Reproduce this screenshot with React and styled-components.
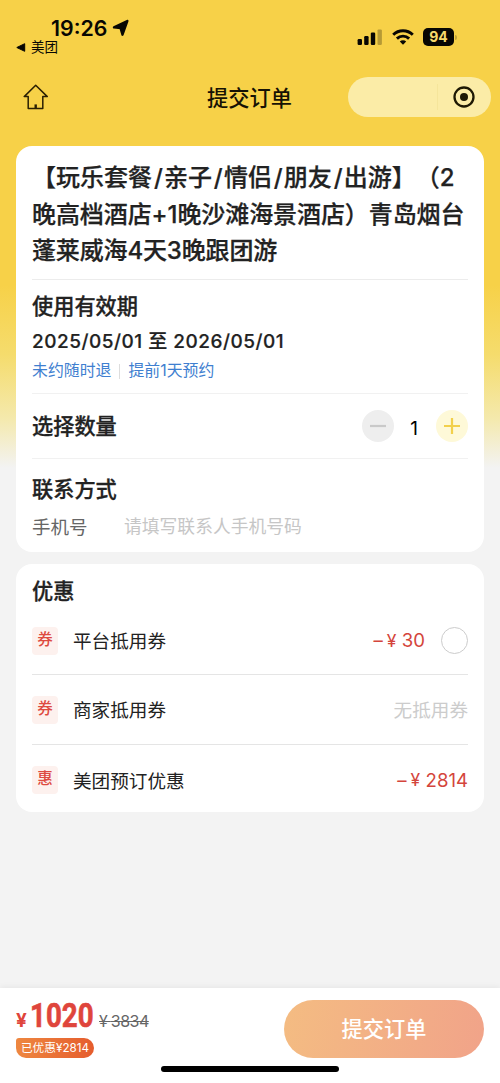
import React from "react";
import styled, { createGlobalStyle } from "styled-components";

const themes = ["【玩乐套餐", "亲子", "情侣", "朋友", "出游】（2"];

const discounts = [
  { tag: "券", name: "平台抵用券", amount: "30", selectable: true },
  { tag: "券", name: "商家抵用券" },
  { tag: "惠", name: "美团预订优惠", amount: "2814" },
];

export default function App() {
  return (
    <>
      <GlobalStyle />
      <Page>
        <StatusBar>
          <StatusLeft>
            <Clock>
              <span>19:26</span>
              <svg width="18" height="18" viewBox="0 0 18 18">
                <path
                  d="M15.3 2 2 8.4l6.6.7 1.9 6.6z"
                  fill="#080703"
                  stroke="#080703"
                  strokeWidth="2.4"
                  strokeLinejoin="round"
                />
              </svg>
            </Clock>
            <BackApp>
              <svg width="10" height="9" viewBox="0 0 10 9">
                <path d="M.8 4.5 8.7.7v7.6z" fill="#080703" stroke="#080703" />
              </svg>
              <span>美团</span>
            </BackApp>
          </StatusLeft>
          <StatusRight>
            <svg width="25" height="16" viewBox="0 0 25 16">
              <rect x="0.6" y="10" width="4.4" height="6" rx="1.2" />
              <rect x="7.2" y="7" width="4.4" height="9" rx="1.2" />
              <rect x="13.8" y="3.6" width="4.4" height="12.4" rx="1.2" />
              <rect x="20.5" y="0.4" width="4.4" height="15.6" rx="1.2" opacity="0.27" />
            </svg>
            <svg width="22" height="16" viewBox="0 0 22 16">
              <g fill="none" stroke="#080703" strokeWidth="2.9">
                <path d="M1.2 5.7a14 14 0 0 1 19.6 0" />
                <path d="M4.9 9.6a8.7 8.7 0 0 1 12.2 0" />
              </g>
              <path d="M7.8 12.6a4.6 4.6 0 0 1 6.4 0L11 15.8z" />
            </svg>
            <Battery>
              <BatteryBody>94</BatteryBody>
              <BatteryTip />
            </Battery>
          </StatusRight>
        </StatusBar>

        <NavBar>
          <HomeIcon width="26" height="26" viewBox="0 0 26 26">
            <path d="M1.2 12.6 12.7 1.3l11.6 11.3h-4.5v11.8H5.2V12.6z" />
            <path d="M12.7 20.4v4" strokeWidth="2.4" />
          </HomeIcon>
          <NavTitle>提交订单</NavTitle>
          <Capsule>
            <CapsuleLine />
            <svg width="22" height="22" viewBox="0 0 22 22">
              <circle cx="11" cy="11" r="9.5" fill="none" stroke="#1e1904" strokeWidth="2.3" />
              <circle cx="11" cy="11" r="4" fill="#1e1904" />
            </svg>
          </Capsule>
        </NavBar>

        <Card>
          <TitleSection>
            <TitleLine>
              {themes.map((theme, i) => (
                <React.Fragment key={theme}>
                  {i > 0 && <Slash>/</Slash>}
                  {theme}
                </React.Fragment>
              ))}
            </TitleLine>
            <TitleLine $spacing="-0.08px">晚高档酒店+1晚沙滩海景酒店）青岛烟台</TitleLine>
            <TitleLine $spacing="-0.15px">蓬莱威海4天3晚跟团游</TitleLine>
          </TitleSection>
          <ValiditySection>
            <Heading>使用有效期</Heading>
            <DateRange>2025/05/01 至 2026/05/01</DateRange>
            <Policies>
              <span>未约随时退</span>
              <PolicyLine />
              <span>提前1天预约</span>
            </Policies>
          </ValiditySection>
          <CountSection>
            <Heading>选择数量</Heading>
            <Stepper>
              <StepButton $bg="#eeeeee" $color="#c9c9c9">
                <svg width="16" height="16" viewBox="0 0 16 16">
                  <path d="M0 8h16" />
                </svg>
              </StepButton>
              <Count>1</Count>
              <StepButton $bg="#fef9d8" $color="#f2d04b">
                <svg width="16" height="16" viewBox="0 0 16 16">
                  <path d="M0 8h16M8 0v16" />
                </svg>
              </StepButton>
            </Stepper>
          </CountSection>
          <ContactSection>
            <Heading>联系方式</Heading>
            <Field>
              <label htmlFor="phone">手机号</label>
              <input id="phone" type="tel" placeholder="请填写联系人手机号码" />
            </Field>
          </ContactSection>
        </Card>

        <DiscountCard>
          <Heading>优惠</Heading>
          {discounts.map((item) => (
            <DiscountRow key={item.name}>
              <Tag>{item.tag}</Tag>
              <DiscountName>{item.name}</DiscountName>
              {item.amount ? (
                <Amount>
                  <i>–</i>
                  <b>¥</b>
                  {item.amount}
                </Amount>
              ) : (
                <Empty>无抵用券</Empty>
              )}
              {item.selectable && <Radio />}
            </DiscountRow>
          ))}
        </DiscountCard>

        <Footer>
          <FooterMain>
            <div>
              <Prices>
                <Currency>¥</Currency>
                <Price>1020</Price>
                <OldPrice>
                  <span>¥</span>3834
                </OldPrice>
              </Prices>
              <Saved>已优惠¥2814</Saved>
            </div>
            <Submit>提交订单</Submit>
          </FooterMain>
          <HomeIndicator />
        </Footer>
      </Page>
    </>
  );
}

const GlobalStyle = createGlobalStyle`
  * {
    box-sizing: border-box;
  }
  body {
    margin: 0;
    font-family: Inter, "Noto Sans CJK SC", sans-serif;
    color: #222222;
    text-spacing-trim: space-all;
  }
  svg {
    display: block;
    flex-shrink: 0;
  }
`;

const Page = styled.div`
  display: flex;
  flex-direction: column;
  width: 500px;
  height: 1083px;
  overflow: hidden;
  background: linear-gradient(
    #f7d148 0,
    #f7d148 285px,
    #f5dc6d 355px,
    #f4e9ac 418px,
    #f3f3f3 468px
  );
`;

const StatusBar = styled.div`
  display: flex;
  justify-content: space-between;
  height: 64px;
  padding: 16px 43px 0 16px;
  color: #080703;
`;

const StatusLeft = styled.div`
  display: flex;
  flex-direction: column;
`;

const Clock = styled.div`
  display: flex;
  align-items: center;
  gap: 5px;
  height: 23px;
  padding-left: 35px;
  font-size: 21.3px;
  font-weight: 600;
`;

const BackApp = styled.div`
  display: flex;
  align-items: center;
  gap: 5px;
  height: 17px;
  font-size: 13.5px;
  line-height: 17px;
`;

const StatusRight = styled.div`
  display: flex;
  align-items: center;
  gap: 10px;
  height: 18px;
  margin-top: 12px;
  fill: #080703;
`;

const Battery = styled.div`
  display: flex;
  align-items: center;
  gap: 1px;
  margin-left: -1px;
`;

const BatteryBody = styled.div`
  width: 31px;
  height: 18px;
  border-radius: 5px;
  background: #080703;
  color: #f7d96b;
  font-size: 14px;
  font-weight: 700;
  line-height: 18px;
  text-align: center;
`;

const BatteryTip = styled.div`
  width: 2px;
  height: 5px;
  border-radius: 0 2px 2px 0;
  background: #c2a53a;
`;

const NavBar = styled.div`
  display: grid;
  grid-template-columns: 1fr auto 1fr;
  align-items: center;
  height: 66px;
  padding: 0 9px 0 23px;
  margin-bottom: 16px;
`;

const HomeIcon = styled.svg`
  fill: none;
  stroke: #2b2003;
  stroke-width: 1.5;
  stroke-linejoin: round;
`;

const NavTitle = styled.div`
  margin-left: -15px;
  padding-top: 2px;
  font-size: 21.2px;
  font-weight: 500;
  line-height: 30px;
  color: #161204;
`;

const Capsule = styled.div`
  display: flex;
  align-items: center;
  justify-content: flex-end;
  justify-self: end;
  gap: 15px;
  width: 143px;
  height: 40px;
  padding-right: 16px;
  border-radius: 20px;
  background: #fbeca7;
`;

const CapsuleLine = styled.div`
  width: 1px;
  height: 26px;
  background: #f5e59b;
`;

const Card = styled.section`
  flex-shrink: 0;
  height: 406px;
  margin: 0 16px;
  padding: 0 16px;
  border-radius: 16px;
  background: #ffffff;
`;

const TitleSection = styled.div`
  height: 134px;
  padding-top: 14px;
  border-bottom: 1px solid #ececec;
`;

const TitleLine = styled.div`
  font-size: 24px;
  font-weight: 500;
  line-height: 36.7px;
  letter-spacing: ${(props) => props.$spacing || "normal"};
  white-space: nowrap;
  -webkit-text-stroke: 0.25px;
`;

const Slash = styled.span`
  margin: 0 1.2px 0 1.9px;
`;

const Heading = styled.h2`
  margin: 0;
  padding-top: 1px;
  font-size: 21.2px;
  font-weight: 500;
  line-height: 31px;
  -webkit-text-stroke: 0.3px;
`;

const ValiditySection = styled.div`
  height: 114px;
  padding-top: 10px;
  border-bottom: 1px solid #f1f1f1;
`;

const DateRange = styled.div`
  padding-top: 1px;
  font-size: 19px;
  font-weight: 500;
  line-height: 37px;
  letter-spacing: 0.5px;
  white-space: nowrap;
  -webkit-text-stroke: 0.2px;
`;

const Policies = styled.div`
  display: flex;
  align-items: center;
  padding-top: 1px;
  font-size: 15.9px;
  line-height: 20px;
  color: #3f7fd0;
`;

const PolicyLine = styled.div`
  width: 1px;
  height: 15px;
  margin: 0 8px;
  background: #dddddd;
`;

const CountSection = styled.div`
  display: flex;
  align-items: center;
  justify-content: space-between;
  height: 65px;
  border-bottom: 1px solid #f1f1f1;
`;

const Stepper = styled.div`
  display: flex;
  align-items: center;
`;

const StepButton = styled.button`
  display: flex;
  align-items: center;
  justify-content: center;
  width: 32px;
  height: 32px;
  padding: 0;
  border: none;
  border-radius: 50%;
  background: ${(props) => props.$bg};
  path {
    stroke: ${(props) => props.$color};
    stroke-width: 2.2;
  }
`;

const Count = styled.div`
  width: 42px;
  padding: 4px 2px 0 0;
  font-size: 19px;
  color: #000000;
  text-align: center;
`;

const ContactSection = styled.div`
  padding-top: 14px;
`;

const Field = styled.div`
  display: flex;
  align-items: center;
  height: 41px;
  font-size: 18.5px;
  label {
    width: 92px;
    color: #666666;
  }
  input {
    flex: 1;
    padding: 1px 0 0;
    border: none;
    outline: none;
    font-family: inherit;
    font-size: 17.8px;
    &::placeholder {
      color: #c6c6c6;
    }
  }
`;

const DiscountCard = styled.section`
  flex-shrink: 0;
  height: 248px;
  margin: 12px 16px 0;
  padding: 11px 16px 0;
  border-radius: 16px;
  background: #ffffff;
`;

const DiscountRow = styled.div`
  display: flex;
  align-items: center;
  height: 70px;
  border-bottom: 1px solid #e5e5e5;
  font-size: 18.6px;
  &:first-of-type {
    height: 68px;
  }
  &:last-of-type {
    border-bottom: none;
  }
`;

const Tag = styled.div`
  width: 26px;
  height: 28px;
  margin-right: 15px;
  border-radius: 4px;
  background: #fdf1ee;
  color: #dd4a40;
  font-size: 15.5px;
  font-weight: 500;
  line-height: 26px;
  text-align: center;
`;

const DiscountName = styled.div`
  flex: 1;
  padding-bottom: 2px;
`;

const Amount = styled.div`
  display: flex;
  align-items: center;
  padding-bottom: 1px;
  color: #d4453c;
  i {
    margin-right: 4px;
    font-style: normal;
  }
  b {
    width: 15px;
    font-size: 17.5px;
    font-weight: 400;
  }
`;

const Empty = styled.div`
  padding-bottom: 2px;
  color: #cccccc;
`;

const Radio = styled.div`
  width: 27px;
  height: 27px;
  margin-left: 16px;
  border: 1.5px solid #cccccc;
  border-radius: 50%;
`;

const Footer = styled.footer`
  height: 95px;
  margin-top: auto;
  background: #ffffff;
  box-shadow: 0 -1px 6px rgba(0, 0, 0, 0.06);
`;

const FooterMain = styled.div`
  display: flex;
  justify-content: space-between;
  height: 78px;
  padding: 12px 16px 0;
`;

const Prices = styled.div`
  display: flex;
  align-items: baseline;
  height: 38px;
  color: #df453c;
  line-height: 32px;
`;

const Currency = styled.span`
  width: 14px;
  font-size: 19px;
  font-weight: 700;
`;

const Price = styled.span`
  width: 63px;
  font-family: Roboto, sans-serif;
  font-size: 33px;
  font-weight: 700;
  transform: scaleX(0.84);
  transform-origin: left;
  -webkit-text-stroke: 0.6px;
`;

const OldPrice = styled.span`
  margin-left: 3px;
  font-size: 16px;
  letter-spacing: -0.5px;
  color: #666666;
  text-decoration: line-through;
  span {
    padding-left: 3px;
    letter-spacing: 3px;
  }
`;

const Saved = styled.div`
  width: 78px;
  height: 20px;
  border-radius: 3px 10px 10px 10px;
  background: linear-gradient(90deg, #ee8740, #e55c2d);
  color: #ffffff;
  font-size: 11.7px;
  line-height: 20px;
  text-align: center;
  white-space: nowrap;
`;

const Submit = styled.button`
  width: 200px;
  height: 58px;
  padding: 0 0 3px;
  border: none;
  border-radius: 29px;
  background: linear-gradient(100deg, #f4bc82, #f1a389);
  color: #ffffff;
  font-family: inherit;
  font-size: 21.2px;
  font-weight: 500;
`;

const HomeIndicator = styled.div`
  width: 178px;
  height: 6px;
  margin: 0 auto;
  border-radius: 3px;
  background: #000000;
`;
